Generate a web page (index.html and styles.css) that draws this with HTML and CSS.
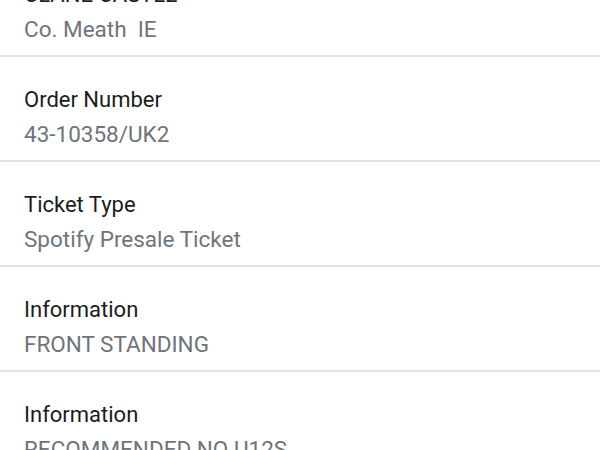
FILE: index.html
```html
<!DOCTYPE html>
<html lang="en">
<head>
<meta charset="utf-8">
<title>Ticket details</title>
<link rel="stylesheet" href="styles.css">
</head>
<body>
<ul class="details">
  <li class="row">
    <div class="label">CLANE CASTLE</div>
    <div class="value">Co. Meath&nbsp; IE</div>
  </li>
  <li class="row">
    <div class="label">Order Number</div>
    <div class="value">43-10358/UK2</div>
  </li>
  <li class="row">
    <div class="label">Ticket Type</div>
    <div class="value">Spotify Presale Ticket</div>
  </li>
  <li class="row">
    <div class="label">Information</div>
    <div class="value">FRONT STANDING</div>
  </li>
  <li class="row">
    <div class="label">Information</div>
    <div class="value">RECOMMENDED NO U12S</div>
  </li>
</ul>
</body>
</html>
```
FILE: styles.css
```css
html, body {
  margin: 0;
  padding: 0;
  background: #ffffff;
  overflow: hidden;
}
body {
  font-family: Roboto, "Liberation Sans", sans-serif;
}
.details {
  list-style: none;
  margin: -48px 0 0 0;
  padding: 0;
}
.row {
  padding: 25px 24px 8px 24px;
  border-bottom: 2px solid #e2e2e2;
}
.label {
  font-size: 22px;
  line-height: 35px;
  color: #1c1c1c;
}
.value {
  font-size: 22.5px;
  line-height: 35px;
  color: #6f747a;
}
```
